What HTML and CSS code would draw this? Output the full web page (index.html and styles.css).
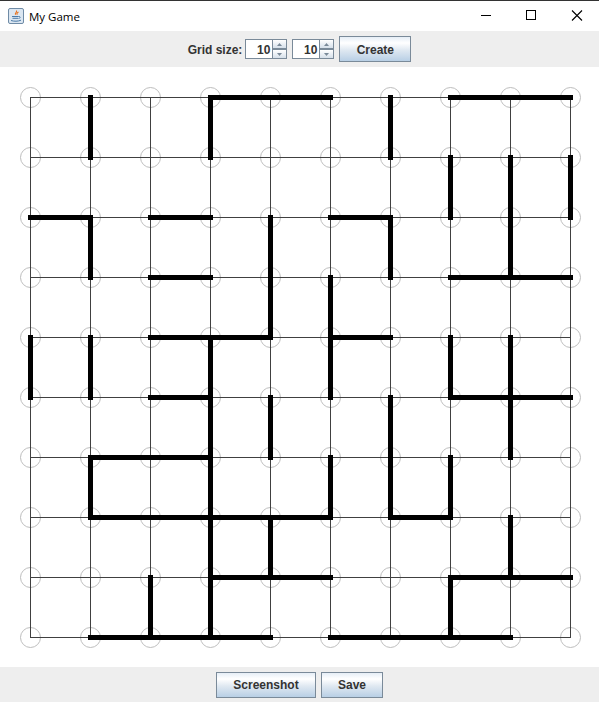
FILE: index.html
```html
<!DOCTYPE html>
<html lang="en">
<head>
<meta charset="utf-8">
<title>My Game</title>
<link rel="stylesheet" href="styles.css">
</head>
<body>
<div class="window">
  <header class="titlebar">
    <svg class="app-icon" width="16" height="16" viewBox="0 0 16 16">
      <rect x="0.5" y="0.5" width="15" height="15" rx="1.5" fill="#dbe6f1" stroke="#6f8ba6"/>
      <path d="M8.5 2.5c1 1.5-2 2.5-1 4.2M10.5 4c-1.5.8-2 1.5-1.2 2.7" fill="none" stroke="#e8701a" stroke-width="1.1"/>
      <path d="M4 8.5h6.5M4.5 10.3h5.5M3 12.5c3 1 7 1 10-.3M10.5 8.5c2-.5 2.5 1.6 0 2" fill="none" stroke="#4a7aa8" stroke-width="1"/>
    </svg>
    <span class="title">My Game</span>
    <div class="controls">
      <svg class="ctl" width="46" height="30" viewBox="0 0 46 30"><path d="M20 14.5h10" stroke="#000" fill="none"/></svg>
      <svg class="ctl" width="46" height="30" viewBox="0 0 46 30"><rect x="19.5" y="9.5" width="9" height="9" stroke="#000" fill="none"/></svg>
      <svg class="ctl" width="46" height="30" viewBox="0 0 46 30"><path d="M19 9.5l10 10M29 9.5l-10 10" stroke="#000" stroke-width="1.1" fill="none"/></svg>
    </div>
  </header>

  <div class="toolbar toolbar-top">
    <span class="label">Grid size:</span>
    <div class="spinner">
      <span class="field">10</span>
      <div class="arrows">
        <span class="arrow"><svg width="5" height="3" viewBox="0 0 5 3"><path d="M2.5 0L5 3H0z" fill="#7a8a99"/></svg></span>
        <span class="arrow"><svg width="5" height="3" viewBox="0 0 5 3"><path d="M0 0h5L2.5 3z" fill="#7a8a99"/></svg></span>
      </div>
    </div>
    <div class="spinner">
      <span class="field">10</span>
      <div class="arrows">
        <span class="arrow"><svg width="5" height="3" viewBox="0 0 5 3"><path d="M2.5 0L5 3H0z" fill="#7a8a99"/></svg></span>
        <span class="arrow"><svg width="5" height="3" viewBox="0 0 5 3"><path d="M0 0h5L2.5 3z" fill="#7a8a99"/></svg></span>
      </div>
    </div>
    <button class="btn btn-create">Create</button>
  </div>

  <main class="board">
    <svg class="grid" width="599" height="600" viewBox="0 67 599 600">
      <defs>
        <pattern id="node" x="0" y="67" width="60" height="60" patternUnits="userSpaceOnUse">
          <circle cx="30.5" cy="30.5" r="10" fill="none" stroke="#bdbdbd"/>
        </pattern>
      </defs>
      <rect x="0" y="67" width="599" height="600" fill="url(#node)"/>
      <path class="thin" d="M30.5 97v540M90.5 97v540M150.5 97v540M210.5 97v540M270.5 97v540M330.5 97v540M390.5 97v540M450.5 97v540M510.5 97v540M570.5 97v540M30 97.5h541M30 157.5h541M30 217.5h541M30 277.5h541M30 337.5h541M30 397.5h541M30 457.5h541M30 517.5h541M30 577.5h541M30 637.5h541"/>
      <path class="wall" d="M90.5 97.5v60M210.5 97.5v60M390.5 97.5v60M450.5 157.5v60M510.5 157.5v120M570.5 157.5v60M90.5 217.5v60M270.5 217.5v120M390.5 217.5v60M330.5 277.5v120M30.5 337.5v60M90.5 337.5v60M210.5 337.5v300M450.5 337.5v60M510.5 337.5v120M270.5 397.5v60M390.5 397.5v120M90.5 457.5v60M330.5 457.5v60M450.5 457.5v60M270.5 517.5v60M510.5 517.5v60M150.5 577.5v60M450.5 577.5v60M210.5 97.5h120M450.5 97.5h120M30.5 217.5h60M150.5 217.5h60M330.5 217.5h60M150.5 277.5h60M450.5 277.5h120M150.5 337.5h120M330.5 337.5h60M150.5 397.5h60M450.5 397.5h120M90.5 457.5h120M90.5 517.5h240M390.5 517.5h60M210.5 577.5h120M450.5 577.5h120M90.5 637.5h180M330.5 637.5h180"/>
    </svg>
  </main>

  <div class="toolbar toolbar-bottom">
    <button class="btn btn-shot">Screenshot</button>
    <button class="btn btn-save">Save</button>
  </div>
</div>
</body>
</html>
```

FILE: styles.css
```css
* { box-sizing: border-box; }
html, body { margin: 0; padding: 0; }
body { background: #fff; font-family: "Liberation Sans", Arial, sans-serif; }
.window { width: 599px; height: 702px; display: flex; flex-direction: column; overflow: hidden; }

.titlebar {
  height: 31px;
  flex: none;
  border-top: 1px solid #333;
  background: #fff;
  display: flex;
  align-items: center;
  padding-left: 8px;
}
.app-icon { flex: none; margin-right: 5px; }
.title { font-family: "Open Sans", "Noto Sans", sans-serif; font-size: 11.5px; color: #000; }
.controls { margin-left: auto; display: flex; }
.ctl { display: block; }

.toolbar { flex: none; background: #eee; display: flex; justify-content: center; }
.toolbar-top { height: 36px; align-items: center; }
.toolbar-bottom { height: 35px; padding-top: 5px; align-items: flex-start; gap: 5px; }

.label { font-size: 12px; font-weight: 700; color: #333; margin-right: 3px; margin-top: 2px; }

.spinner { display: flex; width: 42px; height: 20px; margin-right: 5px; }
.field {
  width: 27px;
  background: #fff;
  border-top: 1px solid #7a8a99;
  border-left: 1px solid #7a8a99;
  border-bottom: 1px solid #7a8a99;
  font-size: 12px;
  font-weight: 700;
  color: #333;
  text-align: right;
  line-height: 20px;
  padding-right: 2px;
}
.arrows { width: 15px; display: flex; flex-direction: column; border: 1px solid #7a8a99; }
.arrow {
  flex: 1;
  display: flex;
  align-items: center;
  justify-content: center;
  background: linear-gradient(#fff, #d6e0ea);
}
.arrow + .arrow { border-top: 2px solid #7a8a99; }
.arrow svg { display: block; }

.btn {
  height: 26px;
  padding: 0;
  border: 1px solid #7a8a99;
  background: linear-gradient(#e6eef6 0, #fff 25%, #dfe8f1 55%, #b8cfe5 100%);
  font-family: "Liberation Sans", Arial, sans-serif;
  font-size: 12px;
  font-weight: 700;
  color: #333;
}
.btn-create { width: 72px; padding-top: 2px; }
.btn-shot { width: 100px; }
.btn-save { width: 62px; }

.board { flex: none; height: 600px; background: #fff; }
.grid { display: block; }
.thin { fill: none; stroke: #404040; stroke-width: 1; shape-rendering: crispEdges; }
.wall { fill: none; stroke: #000; stroke-width: 5; stroke-linecap: square; shape-rendering: crispEdges; }
```
